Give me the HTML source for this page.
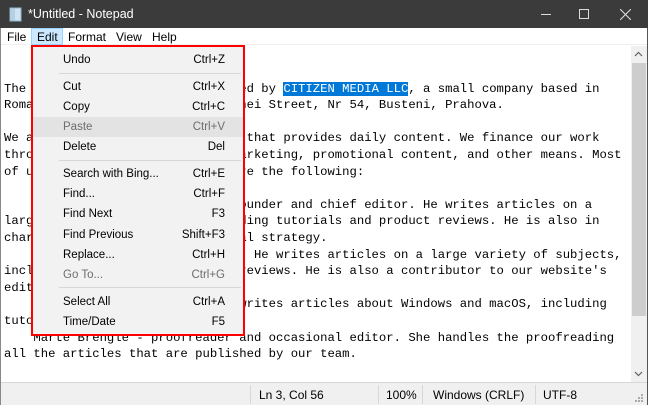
<!DOCTYPE html>
<html><head><meta charset="utf-8"><style>
*{margin:0;padding:0;box-sizing:border-box}
body{width:648px;height:405px;overflow:hidden;background:#fff;font-family:"Liberation Sans",sans-serif;position:relative}
#title{position:absolute;left:0;top:0;width:648px;height:28px;background:#3b3b3b;color:#fff;font-size:12.5px}
#menubar{position:absolute;left:0;top:28px;width:648px;height:17px;background:#fff;font-size:12px;color:#000;border-bottom:1px solid #f0f0f0}
#menubar span{position:absolute;top:2px}
#text{position:absolute;left:1px;top:47.5px;width:630px;height:334px;overflow:hidden;font-family:"Liberation Mono",monospace;font-size:12.25px;line-height:16.6px;white-space:pre;color:#000;padding-left:3px}
.sel{background:#0078d7;color:#fff}
#sb{position:absolute;left:631px;top:46px;width:16px;height:336px;background:#f0f0f0}
#thumb{position:absolute;left:632px;top:63px;width:14px;height:253px;background:#cdcdcd}
#status{position:absolute;left:0;top:382px;width:648px;height:23px;background:#f0f0f0;border-top:1px solid #d7d7d7;font-size:12px}
#status span{position:absolute;top:5px}
.div{position:absolute;top:2px;width:1px;height:19px;background:#d7d7d7}
#menu{position:absolute;left:31px;top:45px;width:214px;height:291px;background:#f2f2f2;border:2px solid #f00;font-size:11.5px}
.it{position:absolute;left:0;width:210px;height:20px}
.it .l{position:absolute;left:30px;top:4px}
.it .r{position:absolute;right:18px;top:4px}
.dis{color:#6d6d6d}
.sep{position:absolute;left:26px;width:182px;height:1px;background:#d7d7d7}
</style></head><body>
<div id="title">
<svg style="position:absolute;left:9px;top:7px" width="14" height="15" viewBox="0 0 14 15"><rect x="1" y="1" width="11" height="13" fill="#cfe3f0" stroke="#8fb6cf"/><path d="M3 1v13M5 1v13" stroke="#9bbccf"/></svg>
<span style="position:absolute;left:28px;top:7px">*Untitled - Notepad</span>
<div style="position:absolute;left:541px;top:14px;width:10px;height:1px;background:#ddd"></div>
<div style="position:absolute;left:579px;top:9px;width:10px;height:10px;border:1px solid #ddd"></div>
<svg style="position:absolute;left:620px;top:9px" width="11" height="11"><path d="M0 0L11 11M11 0L0 11" stroke="#ddd" stroke-width="1.1"/></svg>
</div>
<div id="menubar">
<span style="left:7px">File</span>
<div style="position:absolute;left:31px;top:0;width:32px;height:17px;background:#cce8ff;border:1px solid #99d1ff"></div>
<span style="left:37px">Edit</span>
<span style="left:68px">Format</span>
<span style="left:116px">View</span>
<span style="left:152px">Help</span>
</div>
<div id="text">

The Digital Citizens site is owned by <span class="sel">CITIZEN MEDIA LLC</span>, a small company based in
Romania, with headquarters at Sohei Street, Nr 54, Busteni, Prahova.

We are a small team of writers,  that provides daily content. We finance our work
through advertising, affiliate marketing, promotional content, and other means. Most
of us work remotely, and these are the following:

    Ciprian Adrian Rusen, a co-founder and chief editor. He writes articles on a
large variety of subjects, including tutorials and product reviews. He is also in
charge of our editorial and social strategy.
    Codrut Neagu - senior writer. He writes articles on a large variety of subjects,
including tutorials and product reviews. He is also a contributor to our website's
editorial strategy.
    Diana Ann Roe - writer. She writes articles about Windows and macOS, including
tutorials and product reviews.
    Marte Brengle - proofreader and occasional editor. She handles the proofreading
all the articles that are published by our team.
</div>
<div id="sb"></div>
<div id="thumb"></div>
<svg style="position:absolute;left:634px;top:51px" width="9" height="6"><path d="M1 5L4.5 1.5L8 5" fill="none" stroke="#606060" stroke-width="1.2"/></svg>
<svg style="position:absolute;left:634px;top:371px" width="9" height="6"><path d="M1 1L4.5 4.5L8 1" fill="none" stroke="#606060" stroke-width="1.2"/></svg>
<div id="status">
<div class="div" style="left:250px"></div><div class="div" style="left:378px"></div><div class="div" style="left:422px"></div><div class="div" style="left:535px"></div>
<span style="left:259px">Ln 3, Col 56</span>
<span style="left:386px">100%</span>
<span style="left:433px">Windows (CRLF)</span>
<span style="left:543px">UTF-8</span>
<svg style="position:absolute;left:634px;top:10px" width="10" height="10"><g fill="#aaa"><rect x="7" y="1" width="2" height="2"/><rect x="4" y="4" width="2" height="2"/><rect x="7" y="4" width="2" height="2"/><rect x="1" y="7" width="2" height="2"/><rect x="4" y="7" width="2" height="2"/><rect x="7" y="7" width="2" height="2"/></g></svg>
</div>
<div style="position:absolute;left:0;top:28px;width:1px;height:377px;background:#888"></div>
<div style="position:absolute;left:647px;top:28px;width:1px;height:377px;background:#555"></div>
<div id="menu">
<div class="it" style="top:3px"><span class="l">Undo</span><span class="r">Ctrl+Z</span></div>
<div class="sep" style="top:26px"></div>
<div class="it" style="top:30px"><span class="l">Cut</span><span class="r">Ctrl+X</span></div>
<div class="it" style="top:50px"><span class="l">Copy</span><span class="r">Ctrl+C</span></div>
<div class="it dis" style="top:70px;background:#e3e3e3"><span class="l">Paste</span><span class="r">Ctrl+V</span></div>
<div class="it" style="top:90px"><span class="l">Delete</span><span class="r">Del</span></div>
<div class="sep" style="top:113px"></div>
<div class="it" style="top:117px"><span class="l">Search with Bing...</span><span class="r">Ctrl+E</span></div>
<div class="it" style="top:137px"><span class="l">Find...</span><span class="r">Ctrl+F</span></div>
<div class="it" style="top:157px"><span class="l">Find Next</span><span class="r">F3</span></div>
<div class="it" style="top:178px"><span class="l">Find Previous</span><span class="r">Shift+F3</span></div>
<div class="it" style="top:198px"><span class="l">Replace...</span><span class="r">Ctrl+H</span></div>
<div class="it dis" style="top:218px"><span class="l">Go To...</span><span class="r">Ctrl+G</span></div>
<div class="sep" style="top:240px"></div>
<div class="it" style="top:245px"><span class="l">Select All</span><span class="r">Ctrl+A</span></div>
<div class="it" style="top:265px"><span class="l">Time/Date</span><span class="r">F5</span></div>
</div>
</body></html>
